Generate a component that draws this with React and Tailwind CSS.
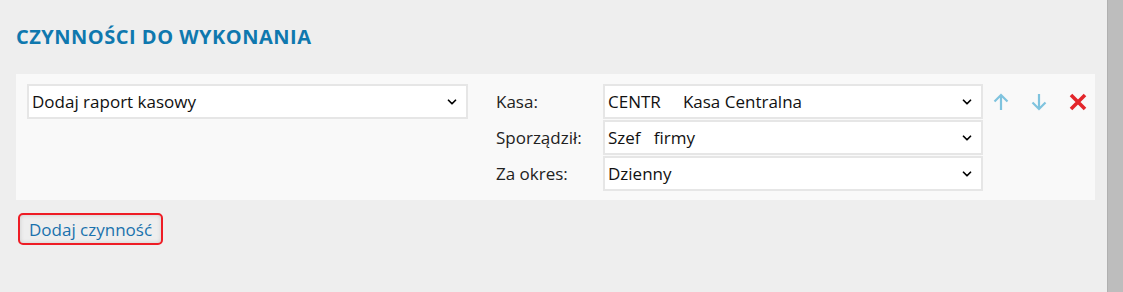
import { ChevronDown } from 'lucide-react'

function Select({ children, className = '' }) {
  return (
    <div
      className={`flex h-[35px] items-center justify-between border-2 border-[#e6e6e6] bg-white pl-[3px] pr-[7px] text-[17px] leading-none text-[#111] ${className}`}
    >
      <span className="whitespace-pre">{children}</span>
      <ChevronDown className="h-[14px] w-[14px] text-black" strokeWidth={3} />
    </div>
  )
}

export default function App() {
  return (
    <div
      className="flex h-[292px] w-[1123px] bg-[#eeeeee]"
      style={{ fontFamily: '"Open Sans", "Noto Sans", sans-serif' }}
    >
      <div className="flex flex-1 flex-col pl-4 pr-3">
        {/* Title */}
        <h2 className="mt-[24px] text-[20px] font-bold leading-[26px] tracking-[0.5px] text-[#0f78ae]">
          CZYNNOŚCI DO WYKONANIA
        </h2>

        {/* Task panel */}
        <div className="mt-[24px] flex h-[126px] bg-[#f9f9f9] pl-[11px] pt-[10px]">
          <Select className="w-[441px]">Dodaj raport kasowy</Select>

          <div className="ml-[28px] flex flex-col gap-[1px]">
            {[
              ['Kasa:', 'CENTR     Kasa Centralna'],
              ['Sporządził:', 'Szef   firmy'],
              ['Za okres:', 'Dzienny'],
            ].map(([label, value]) => (
              <div key={label} className="flex items-center">
                <span className="w-[107px] text-[17px] leading-none text-[#222]">{label}</span>
                <Select className="w-[380px]">{value}</Select>
              </div>
            ))}
          </div>

          <div className="ml-[10px] flex h-[35px] items-center gap-[22px]">
            <svg width="16" height="18" viewBox="0 0 16 18" fill="none" stroke="#7fc3de" strokeWidth="2.2">
              <path d="M8 17V2M1.5 8.5L8 2l6.5 6.5" />
            </svg>
            <svg width="16" height="18" viewBox="0 0 16 18" fill="none" stroke="#7fc3de" strokeWidth="2.2">
              <path d="M8 1v15M1.5 9.5L8 16l6.5-6.5" />
            </svg>
            <svg width="18" height="18" viewBox="0 0 18 18" fill="none" stroke="#e3262b" strokeWidth="3.6">
              <path d="M2 2l14 14M16 2L2 16" />
            </svg>
          </div>
        </div>

        {/* Add action */}
        <div className="ml-[2px] mt-[13px]">
          <button className="h-[32px] rounded-[5px] border-2 border-[#ee1c25] px-[9px] text-[17px] leading-none text-[#1a72ad] shadow-[inset_0_0_4px_rgba(0,0,0,0.15)]">
            Dodaj czynność
          </button>
        </div>
      </div>

      {/* Scrollbar strip */}
      <div className="w-[16px] border-l border-[#b0b0b0] bg-[#bdbdbd]" />
    </div>
  )
}
